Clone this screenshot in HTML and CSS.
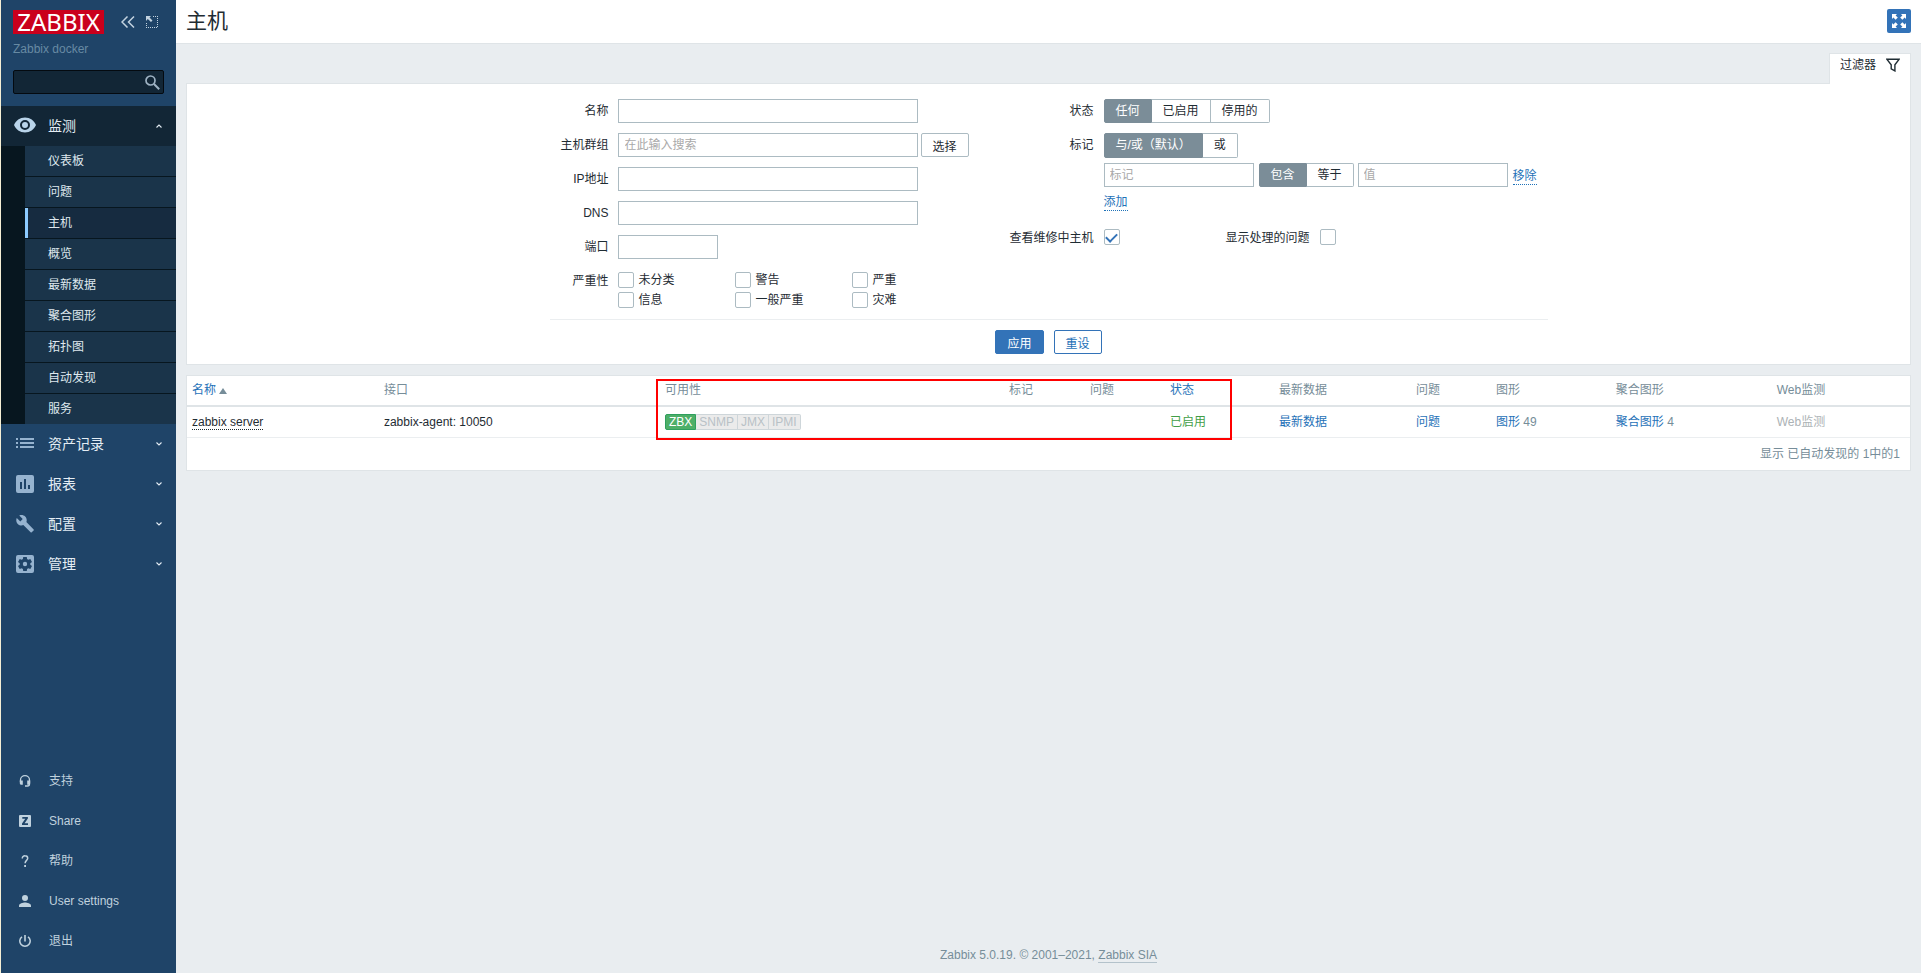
FILE: index.html
```html
<!DOCTYPE html>
<html lang="zh-CN">
<head>
<meta charset="utf-8">
<title>主机</title>
<link rel="stylesheet" href="styles.css">
</head>
<body>
<div class="wrapper">
  <aside class="sidebar">
    <div class="sidebar-header">
      <a class="logo" href="#">ZABBIX</a>
      <button class="icon-button" type="button" aria-label="收起">
        <svg width="14" height="12" viewBox="0 0 14 12"><path d="M6.500.5 1 6l5.500 5.500M13 .5 7.500 6l5.500 5.500" fill="none" stroke="currentColor" stroke-width="1.500"/></svg>
      </button>
      <button class="icon-button" type="button" aria-label="隐藏">
        <svg width="12" height="12" viewBox="0 0 12 12"><path d="M7 .5h5M11.500 2v10M0 11.500h11M.5 7v4" fill="none" stroke="currentColor" stroke-dasharray="1 1"/><path d="M0 0h5L3.500 1.500 6.500 4.500 5 6 1.800 3 0 5z" fill="currentColor"/></svg>
      </button>
    </div>
    <div class="server-name">Zabbix docker</div>
    <form class="search">
      <input type="text" aria-label="搜索">
      <button type="button" aria-label="搜索">
        <svg width="15" height="15" viewBox="0 0 15 15" fill="none" stroke="currentColor"><circle cx="5.500" cy="5.500" r="4.500" stroke-width="1.700"/><path d="m9 9 5.200 5.200" stroke-width="2"/></svg>
      </button>
    </form>
    <nav class="menu-main">
      <a class="menu-item selected" href="#">
        <svg class="menu-icon" width="22" height="18" viewBox="0 0 22 18"><path fill-rule="evenodd" d="M11 .5C6 .5 1.800 3.600 0 8c1.800 4.400 6 7.500 11 7.500S20.200 12.400 22 8C20.200 3.600 16 .5 11 .5zM11 13a5 5 0 1 1 0-10 5 5 0 0 1 0 10zm0-8a3 3 0 1 0 0 6 3 3 0 0 0 0-6z" fill="currentColor"/></svg>
        <span>监测</span>
        <svg class="chevron" width="8" height="6" viewBox="0 0 8 6"><path d="M1.500 4.500 4 2l2.500 2.500" fill="none" stroke="currentColor" stroke-width="1.100"/></svg>
      </a>
      <div class="submenu">
        <a href="#">仪表板</a>
        <a href="#">问题</a>
        <a class="current" href="#">主机</a>
        <a href="#">概览</a>
        <a href="#">最新数据</a>
        <a href="#">聚合图形</a>
        <a href="#">拓扑图</a>
        <a href="#">自动发现</a>
        <a href="#">服务</a>
      </div>
      <a class="menu-item" href="#">
        <svg class="menu-icon" width="22" height="18" viewBox="0 0 22 18"><path d="M2 3h2v2H2zm4 0h14v2H6zM2 7h2v2H2zm4 0h14v2H6zm-4 4h2v2H2zm4 0h14v2H6z" fill="currentColor"/></svg>
        <span>资产记录</span>
        <svg class="chevron" width="8" height="6" viewBox="0 0 8 6"><path d="M1.500 1.500 4 4l2.500-2.500" fill="none" stroke="currentColor" stroke-width="1.100"/></svg>
      </a>
      <a class="menu-item" href="#">
        <svg class="menu-icon" width="22" height="18" viewBox="0 0 22 18"><path fill-rule="evenodd" d="M4 0h14a2 2 0 0 1 2 2v14a2 2 0 0 1-2 2H4a2 2 0 0 1-2-2V2a2 2 0 0 1 2-2zm2 7v7h2V7zm4-3v10h2V4zm4 6v4h2v-4z" fill="currentColor"/></svg>
        <span>报表</span>
        <svg class="chevron" width="8" height="6" viewBox="0 0 8 6"><path d="M1.500 1.500 4 4l2.500-2.500" fill="none" stroke="currentColor" stroke-width="1.100"/></svg>
      </a>
      <a class="menu-item" href="#">
        <svg class="menu-icon" width="22" height="18" viewBox="1 0 22 18"><path transform="translate(2.500 -.8) scale(.8)" d="M22.700 19l-9.100-9.100c.9-2.300.4-5-1.500-6.900-2-2-5-2.400-7.400-1.300L9 6 6 9 1.600 4.700C.4 7.100.9 10.100 2.900 12.100c1.900 1.900 4.600 2.400 6.900 1.500l9.100 9.100c.4.4 1 .4 1.400 0l2.300-2.300c.5-.4.5-1.100.1-1.400z" fill="currentColor"/></svg>
        <span>配置</span>
        <svg class="chevron" width="8" height="6" viewBox="0 0 8 6"><path d="M1.500 1.500 4 4l2.500-2.500" fill="none" stroke="currentColor" stroke-width="1.100"/></svg>
      </a>
      <a class="menu-item" href="#">
        <svg class="menu-icon" width="22" height="18" viewBox="-1 3 22 18"><path transform="translate(-2)" fill-rule="evenodd" d="M5 3h14a2 2 0 0 1 2 2v14a2 2 0 0 1-2 2H5a2 2 0 0 1-2-2V5a2 2 0 0 1 2-2zm12.300 9.700v-1.400l1.700-1.300-1.700-3-2 .8-1.200-.7L13.800 5h-3.600l-.3 2.100-1.200.7-2-.8-1.700 3 1.700 1.300v1.400L5 14l1.700 3 2-.8 1.200.7.3 2.100h3.600l.3-2.100 1.200-.7 2 .8 1.700-3zM12 14.200a2.200 2.200 0 1 1 0-4.400 2.200 2.200 0 0 1 0 4.400z" fill="currentColor"/></svg>
        <span>管理</span>
        <svg class="chevron" width="8" height="6" viewBox="0 0 8 6"><path d="M1.500 1.500 4 4l2.500-2.500" fill="none" stroke="currentColor" stroke-width="1.100"/></svg>
      </a>
    </nav>
    <nav class="menu-user">
      <a href="#"><svg width="12" height="12" viewBox="0 0 12 12"><path d="M1.500 7V5a4.500 4.300 0 0 1 9 0v4c0 1.200-.8 2-2 2H6" fill="none" stroke="currentColor" stroke-width="1.300"/><path d="M.8 5.500h3v4.200H2.300C1.400 9.700.8 9 .8 8.200zm7.400 0h3v2.700c0 .8-.6 1.500-1.500 1.500H8.200z" fill="currentColor"/></svg><span>支持</span></a>
      <a href="#"><svg width="12" height="12" viewBox="0 0 12 12"><path fill-rule="evenodd" d="M1 0h10a1 1 0 0 1 1 1v10a1 1 0 0 1-1 1H1a1 1 0 0 1-1-1V1a1 1 0 0 1 1-1zm2.300 2v1.700h3L3 8.500V10h6V8.300H5.600L8.900 3.500V2z" fill="currentColor"/></svg><span>Share</span></a>
      <a href="#"><svg width="12" height="12" viewBox="0 0 12 12"><path d="M3.300 3.500A2.600 2.600 0 0 1 6 .8c1.600 0 2.700.9 2.700 2.400 0 2.200-2.600 2.200-2.600 5" fill="none" stroke="currentColor" stroke-width="1.500"/><path d="M5.200 10h1.800v2H5.200z" fill="currentColor"/></svg><span>帮助</span></a>
      <a href="#"><svg width="12" height="12" viewBox="0 0 12 12"><circle cx="6" cy="3" r="3" fill="currentColor"/><path d="M0 12v-1.500C0 8.500 4 7.500 6 7.500s6 1 6 3V12z" fill="currentColor"/></svg><span>User settings</span></a>
      <a href="#"><svg width="12" height="12" viewBox="0 0 12 12"><path d="M3 1.800a5.200 5.200 0 1 0 6 0" fill="none" stroke="currentColor" stroke-width="1.500"/><path d="M5.200 0h1.600v6.500H5.200z" fill="currentColor"/></svg><span>退出</span></a>
    </nav>
  </aside>

  <div class="page">
    <header class="page-header">
      <h1>主机</h1>
      <button class="kiosk" type="button" aria-label="全屏">
        <svg width="14" height="14" viewBox="0 0 14 14" fill="currentColor"><path id="arrow" d="M0 0h5L3.600 1.400 5.800 3.600 3.600 5.800 1.400 3.600 0 5z"/><use href="#arrow" transform="matrix(-1 0 0 1 14 0)"/><use href="#arrow" transform="matrix(1 0 0 -1 0 14)"/><use href="#arrow" transform="matrix(-1 0 0 -1 14 14)"/></svg>
      </button>
    </header>

    <main class="content">
      <div class="tab-row">
        <a class="filter-tab" href="#">过滤器
          <svg width="14" height="14" viewBox="0 0 14 14"><path d="M.8 1.200h12.400L8.900 6.800v6.100L5.200 10.800V6.800z" fill="none" stroke="currentColor" stroke-width="1.400"/></svg>
        </a>
      </div>
      <form class="filter">
        <div class="filter-columns">
          <div class="filter-grid">
            <label for="name">名称</label>
            <div><input class="text wide" id="name" type="text"></div>
            <label for="groups">主机群组</label>
            <div class="field-group"><input class="text wide" id="groups" type="text" placeholder="在此输入搜索"><button class="button-grey" type="button">选择</button></div>
            <label for="ip">IP地址</label>
            <div><input class="text wide" id="ip" type="text"></div>
            <label for="dns">DNS</label>
            <div><input class="text wide" id="dns" type="text"></div>
            <label for="port">端口</label>
            <div><input class="text port" id="port" type="text"></div>
            <span class="label">严重性</span>
            <div class="severities">
              <label><input type="checkbox">未分类</label>
              <label><input type="checkbox">警告</label>
              <label><input type="checkbox">严重</label>
              <label><input type="checkbox">信息</label>
              <label><input type="checkbox">一般严重</label>
              <label><input type="checkbox">灾难</label>
            </div>
          </div>
          <div class="filter-grid">
            <span class="label">状态</span>
            <div class="segmented">
              <input type="radio" name="status" id="status-any" checked><label for="status-any">任何</label>
              <input type="radio" name="status" id="status-on"><label for="status-on">已启用</label>
              <input type="radio" name="status" id="status-off"><label for="status-off">停用的</label>
            </div>
            <span class="label">标记</span>
            <div class="tags">
              <div class="segmented">
                <input type="radio" name="evaltype" id="eval-and" checked><label for="eval-and">与/或（默认）</label>
                <input type="radio" name="evaltype" id="eval-or"><label for="eval-or">或</label>
              </div>
              <div class="tag-row">
                <input class="text tag" type="text" placeholder="标记" aria-label="标记">
                <div class="segmented">
                  <input type="radio" name="operator" id="op-contains" checked><label for="op-contains">包含</label>
                  <input type="radio" name="operator" id="op-equals"><label for="op-equals">等于</label>
                </div>
                <input class="text tag" type="text" placeholder="值" aria-label="值">
                <a class="dotted" href="#">移除</a>
              </div>
              <div class="add-row"><a class="dotted" href="#">添加</a></div>
            </div>
            <label for="maintenance">查看维修中主机</label>
            <div class="check-row">
              <input type="checkbox" id="maintenance" checked>
              <label for="suppressed">显示处理的问题</label>
              <input type="checkbox" id="suppressed">
            </div>
          </div>
        </div>
        <div class="filter-buttons">
          <button class="button-primary" type="button">应用</button>
          <button class="button-alt" type="button">重设</button>
        </div>
      </form>

      <section class="hosts">
        <table>
          <colgroup><col class="c-name"><col class="c-interface"><col class="c-availability"><col class="c-tags"><col class="c-problems"><col class="c-status"><col class="c-latest"><col class="c-problems"><col class="c-graphs"><col class="c-screens"><col class="c-web"></colgroup>
          <thead>
            <tr><th><a href="#">名称 <span class="arrow-up"></span></a></th><th>接口</th><th>可用性</th><th>标记</th><th>问题</th><th><a href="#">状态</a></th><th>最新数据</th><th>问题</th><th>图形</th><th>聚合图形</th><th>Web监测</th></tr>
          </thead>
          <tbody>
            <tr>
              <td><a class="host-link" href="#">zabbix server</a></td>
              <td>zabbix-agent: 10050</td>
              <td><div class="availability"><span class="on">ZBX</span><span>SNMP</span><span>JMX</span><span>IPMI</span></div></td>
              <td></td>
              <td></td>
              <td><a class="green" href="#">已启用</a></td>
              <td><a href="#">最新数据</a></td>
              <td><a href="#">问题</a></td>
              <td><a href="#">图形</a> <span class="count">49</span></td>
              <td><a href="#">聚合图形</a> <span class="count">4</span></td>
              <td class="disabled">Web监测</td>
            </tr>
          </tbody>
        </table>
        <div class="table-stats">显示 已自动发现的 1中的1</div>
        <div class="highlight"></div>
      </section>
    </main>
    <footer>Zabbix 5.0.19. © 2001–2021, <a href="#">Zabbix SIA</a></footer>
  </div>
</div>
</body>
</html>
```

FILE: styles.css
```css
* { box-sizing: border-box; }

body {
  margin: 0;
  background: #e9edf0;
  color: #1f2c33;
  font: 12px/18px "Liberation Sans", "Noto Sans CJK SC", sans-serif;
}

a { color: #1f72b8; text-decoration: none; }
button, input { font: inherit; color: inherit; margin: 0; }
button { cursor: pointer; }
svg { display: block; flex: none; }

.wrapper { display: flex; min-height: 100vh; }

/* Sidebar */
.sidebar {
  display: flex;
  flex-direction: column;
  flex: none;
  width: 176px;
  padding-bottom: 12px;
  border-left: 1px solid #f5efd5;
  background: #1f4468;
}
.sidebar-header { display: flex; align-items: center; padding: 10px 12px 0; }
.logo {
  width: 91px;
  height: 24px;
  margin-right: 17px;
  background: #ca001c;
  color: #fff;
  font: 24px/24px "Noto Sans", sans-serif;
  text-align: center;
}
.icon-button { padding: 0; border: 0; background: none; color: #c3d3e0; }
.icon-button + .icon-button { margin-left: 11px; }
.server-name { padding: 6px 12px 0; color: #678aa3; }
.search {
  display: flex;
  align-items: center;
  height: 24px;
  margin: 12px 12px;
  border: 1px solid #040a10;
  border-radius: 2px;
  background: #122636;
}
.search input { flex: 1; min-width: 0; border: 0; background: none; color: #fff; outline: 0; }
.search button { padding: 0 3px; border: 0; background: none; color: #9fb3c4; }

.menu-item {
  display: flex;
  align-items: center;
  height: 40px;
  padding: 0 13px;
  color: #e4edf4;
  font-size: 14px;
}
.menu-icon { margin-right: 12px; color: #96b3cf; }
.menu-item span { flex: 1; }
.selected { background: #122636; }
.selected .menu-icon { color: #b9d4ea; }
.submenu {
  border-left: 24px solid #07161f;
  background: #07161f;
  display: grid;
  gap: 1px;
}
.submenu a {
  height: 30px;
  padding-left: 20px;
  border-left: 3px solid #1a344a;
  background: #1a344a;
  color: #dfe8ee;
  line-height: 30px;
}
.submenu .current { border-color: #8ccbff; background: #162b40; }

.menu-user { margin-top: auto; }
.menu-user a { display: flex; align-items: center; gap: 18px; height: 40px; padding: 0 18px; color: #c0d2de; }

/* Page */
.page { display: flex; flex: 1; flex-direction: column; min-width: 0; }
.page-header {
  display: flex;
  justify-content: space-between;
  height: 44px;
  padding: 0 10px;
  border-bottom: 1px solid #dfe4e7;
  background: #fff;
}
h1 { margin: 0; font-size: 21px; font-weight: 400; line-height: 41px; }
.kiosk {
  display: grid;
  place-items: center;
  width: 24px;
  height: 24px;
  margin-top: 9px;
  padding: 0;
  border: 0;
  border-radius: 2px;
  background: #3373b8;
  color: #fff;
}
.content { padding: 9px 10px 0; }
.tab-row { display: flex; justify-content: flex-end; }
.filter-tab {
  display: flex;
  align-items: center;
  gap: 10px;
  height: 31px;
  margin-bottom: -1px;
  padding: 0 10px 8px;
  border: 1px solid #dfe4e7;
  border-bottom: 0;
  background: #fff;
  color: #1f2c33;
  z-index: 1;
}
.filter { padding: 15px 10px 10px; border: 1px solid #dfe4e7; background: #fff; }
.filter-columns {
  display: flex;
  gap: 37px;
  width: 998px;
  max-width: 100%;
  margin: 0 auto;
  padding-bottom: 11px;
  border-bottom: 1px solid #ebeef0;
}
.filter-grid { display: grid; align-content: start; align-items: start; row-gap: 10px; }
.filter-grid:first-child { grid-template-columns: 59px auto; column-gap: 9px; }
.filter-grid:last-child { grid-template-columns: 88px auto; column-gap: 10px; }
.filter-grid > label, .filter-grid > .label { line-height: 24px; text-align: right; white-space: nowrap; }

.text {
  display: block;
  height: 24px;
  padding: 0 6px 1px;
  border: 1px solid #acbbc2;
  border-radius: 0;
  background: #fff;
}
.text::placeholder { color: #a9a9a9; }
.wide { width: 300px; }
.port { width: 100px; }
.tag { width: 150px; padding-left: 5px; }
.field-group { display: flex; gap: 3px; }
.button-grey, .button-primary, .button-alt {
  height: 24px;
  padding: 3px 11px 0;
  border: 1px solid #acbbc2;
  border-radius: 2px;
  background: #fff;
  line-height: 20px;
}
.button-primary { border-color: #3373b8; background: #3373b8; color: #fff; }
.button-alt { border-color: #3373b8; color: #1f72b8; }

input[type="checkbox"] {
  display: grid;
  place-items: center;
  flex: none;
  width: 16px;
  height: 16px;
  border: 1px solid #acbbc2;
  border-radius: 2px;
  background: #fff;
  appearance: none;
}
input[type="checkbox"]:checked::after {
  content: "";
  width: 9px;
  height: 5px;
  margin-bottom: 2px;
  border: solid #3373b8;
  border-width: 0 0 2px 2px;
  transform: rotate(-45deg);
}
.severities { display: grid; grid-template-columns: repeat(3, 117px); row-gap: 4px; padding-top: 3px; }
.severities label { display: flex; align-items: center; gap: 5px; height: 16px; }

.segmented { display: flex; position: relative; }
.segmented input { position: absolute; opacity: 0; }
.segmented label {
  height: 24px;
  padding: 0 11px;
  border: solid #acbbc2;
  border-width: 1px 1px 1px 0;
  background: #fff;
  line-height: 22px;
  white-space: nowrap;
}
.segmented label:first-of-type { border-radius: 2px 0 0 2px; border-left-width: 1px; }
.segmented label:last-of-type { border-radius: 0 2px 2px 0; }
.segmented input:checked + label { border-color: #7b8d98; background: #7b8d98; color: #fff; }
.tags > .segmented label { height: 25px; }
.tag-row { display: flex; gap: 5px; margin-top: 5px; }
.tag-row .segmented { margin-right: -1px; }
.dotted { align-self: center; padding-top: 2px; border-bottom: 1px dotted #1f72b8; line-height: 16px; }
.add-row { display: flex; height: 29px; }
.check-row { display: flex; padding-top: 3px; line-height: 18px; }
.check-row label { height: 16px; margin: 0 10px 0 106px; }

.filter-buttons { display: flex; justify-content: center; gap: 10px; padding-top: 10px; }

/* Host table */
.hosts { position: relative; margin-top: 10px; border: 1px solid #dfe4e7; background: #fff; }
table { width: 100%; border-collapse: collapse; table-layout: fixed; }
th, td { padding: 0 5px; text-align: left; font-weight: 400; white-space: nowrap; }
th { height: 30px; padding-bottom: 2px; border-bottom: 2px solid #dfe4e7; color: #768d99; }
td { height: 31px; border-bottom: 1px solid #ebeef0; }
.c-name { width: 11.14%; }
.c-interface { width: 16.31%; }
.c-availability { width: 19.97%; }
.c-tags { width: 4.7%; }
.c-problems { width: 4.64%; }
.c-status { width: 6.33%; }
.c-latest { width: 7.95%; }
.c-graphs { width: 6.96%; }
.c-screens { width: 9.34%; }
.arrow-up {
  display: inline-block;
  border: 4px solid transparent;
  border-top: 0;
  border-bottom: 6px solid #768d99;
}
.host-link { border-bottom: 1px dotted #1f2c33; color: #1f2c33; }
.green { color: #429e47; }
.count { color: #768d99; }
.disabled { color: #acb2b5; }
.availability { display: flex; line-height: 14px; color: #b8c1c6; }
.availability span { padding: 0 3px; border: solid #ced6da; border-width: 1px 1px 1px 0; background: #ebebeb; }
.availability .on { border-color: #2f9f5e; border-left-width: 1px; border-radius: 2px 0 0 2px; background: #4eaf68; color: #fff; }
.availability span:last-child { border-radius: 0 2px 2px 0; }
.table-stats { padding: 7px 10px; color: #768d99; text-align: right; }
.highlight {
  position: absolute;
  top: 3px;
  left: 27.22%;
  width: 33.43%;
  height: 61px;
  border: 2px solid #f00;
  pointer-events: none;
}

footer { margin-top: auto; padding-bottom: 9px; color: #768d99; text-align: center; }
footer a { border-bottom: 1px solid #b3c2cb; color: #768d99; }
```
